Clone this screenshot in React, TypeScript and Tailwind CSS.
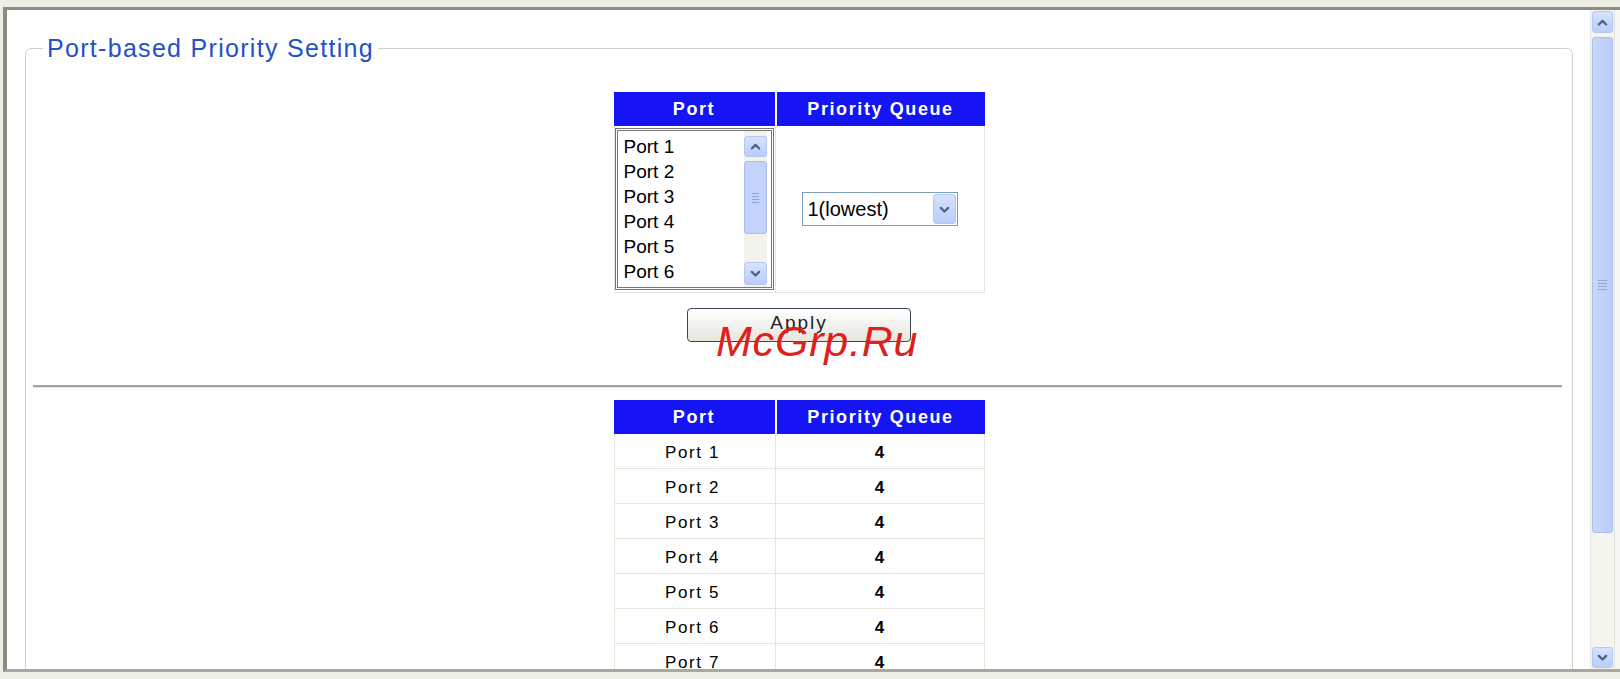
const ports = [1, 2, 3, 4, 5, 6, 7];

function Chevron({ up, size = 14 }: { up?: boolean; size?: number }) {
  return (
    <svg width={size} height={size} viewBox="0 0 16 16">
      <path
        d={up ? 'M3.5 10.5 L8 6 L12.5 10.5' : 'M3.5 6 L8 10.5 L12.5 6'}
        fill="none"
        stroke="#4d6185"
        strokeWidth={2.8}
        strokeLinecap="round"
        strokeLinejoin="round"
      />
    </svg>
  );
}

function ScrollBtn({ up, className = '' }: { up?: boolean; className?: string }) {
  return (
    <div
      className={`flex items-center justify-center rounded-[3px] border border-[#b4c6f2] bg-linear-to-b from-[#d6e2fe] to-[#b9cdfa] ${className}`}
    >
      <Chevron up={up} size={13} />
    </div>
  );
}

function Grip({ w = 8 }: { w?: number }) {
  return (
    <div className="flex flex-col gap-[2px]">
      {[0, 1, 2, 3].map((i) => (
        <div key={i} className="h-px bg-[#8ea6dc]" style={{ width: w }} />
      ))}
    </div>
  );
}

function HeaderRow() {
  return (
    <div className="flex h-[34px] gap-[2px] text-[18px] font-bold tracking-[1.6px] text-white">
      <div className="flex w-[161px] items-center justify-center bg-[#1414f5]">Port</div>
      <div className="flex flex-1 items-center justify-center bg-[#1414f5]">Priority Queue</div>
    </div>
  );
}

export default function App() {
  return (
    <div className="relative flex h-screen w-full flex-col overflow-hidden bg-[#efeee6] pt-[7px] pb-[7px] pl-[3px] font-['Liberation_Sans',Arial,sans-serif] text-black">
      <div className="flex min-h-0 flex-1 border-t-[3px] border-b-[3px] border-l-[4px] border-t-[#8d8c84] border-b-[#a9a89e] border-l-[#8d8c84]">
        {/* page content */}
        <div className="min-w-0 flex-1 overflow-hidden bg-white">
          <fieldset className="mt-[24px] ml-[18px] mr-[17px] rounded-[6px] border border-[#d2d1c6] px-[7px] pb-[40px]">
            <legend className="ml-[10px] px-[4px] text-[25px] leading-[29px] tracking-[1.3px] text-[#2352c4]">
              Port-based Priority Setting
            </legend>

            {/* setting table */}
            <div className="mx-auto mt-[29px] w-[371px]">
              <HeaderRow />
              <div className="flex h-[167px] border-x border-b border-[#e8e6da]">
                <div className="w-[161px] border-r border-[#e8e6da] pt-[2px]">
                  <div className="flex h-[162px] w-[159px] border-[3px] border-double border-[#777]">
                    <div className="flex-1 pt-[3px] pl-[6px] text-[19px] leading-[25px]">
                      {ports.slice(0, 6).map((p) => (
                        <div key={p}>Port {p}</div>
                      ))}
                    </div>
                    <div className="mr-[4px] flex w-[23px] flex-col bg-[#f3f2ec] pt-[5px] pb-[2px]">
                      <ScrollBtn up className="h-[21px]" />
                      <div className="mt-[4px] flex h-[73px] items-center justify-center rounded-[3px] border border-[#a9bdf0] bg-[#c3d3fb]">
                        <Grip w={7} />
                      </div>
                      <ScrollBtn className="mt-auto h-[23px]" />
                    </div>
                  </div>
                </div>
                <div className="flex flex-1 items-center justify-center">
                  <div className="flex h-[34px] w-[156px] items-center border border-[#7f9db9] bg-white">
                    <span className="pl-[5px] text-[20px]">1(lowest)</span>
                    <ScrollBtn className="mr-[1px] ml-auto h-[30px] w-[23px]" />
                  </div>
                </div>
              </div>
            </div>

            <div className="mt-[15px] flex justify-center">
              <button className="h-[34px] w-[224px] rounded-[4px] border border-[#3b4656] bg-linear-to-b from-white to-[#e6e5dd] pb-[4px] text-[19px] tracking-[2px] text-[#222]">
                Apply
              </button>
            </div>

            <div className="mt-[43px] mr-[3px] border-t-2 border-b border-t-[#a6a59c] border-b-[#e4e3dc]" />

            {/* status table */}
            <div className="mx-auto mt-[12px] w-[371px]">
              <HeaderRow />
              {ports.map((p) => (
                <div key={p} className="flex h-[35px] border-x border-b border-[#e8e6da] text-[17px]">
                  <div className="flex w-[161px] items-center justify-center border-r border-[#e8e6da] pr-[4px] pt-[3px] tracking-[1.6px]">
                    Port {p}
                  </div>
                  <div className="flex flex-1 items-center justify-center pt-[3px] font-bold">4</div>
                </div>
              ))}
            </div>
          </fieldset>
        </div>

        {/* window scrollbar */}
        <div className="flex w-[24px] flex-col border-l border-[#ebeae2] bg-[#f5f4ee] px-[1px] pt-[1px] pb-[1px]">
          <ScrollBtn up className="h-[22px]" />
          <div className="mt-[4px] flex h-[496px] items-center justify-center rounded-[3px] border border-[#a9bdf0] bg-linear-to-r from-[#c9d7fc] to-[#b9cbf8]">
            <Grip w={9} />
          </div>
          <ScrollBtn className="mt-auto h-[21px]" />
        </div>
        <div className="w-[6px] border-l border-[#e2e1d8] bg-[#f7f6f1]" />
      </div>

      {/* watermark */}
      <div className="pointer-events-none absolute top-[320px] left-[716px] text-[43px] leading-none tracking-[0.8px] italic text-[#e0201c]">
        McGrp.Ru
      </div>
    </div>
  );
}
